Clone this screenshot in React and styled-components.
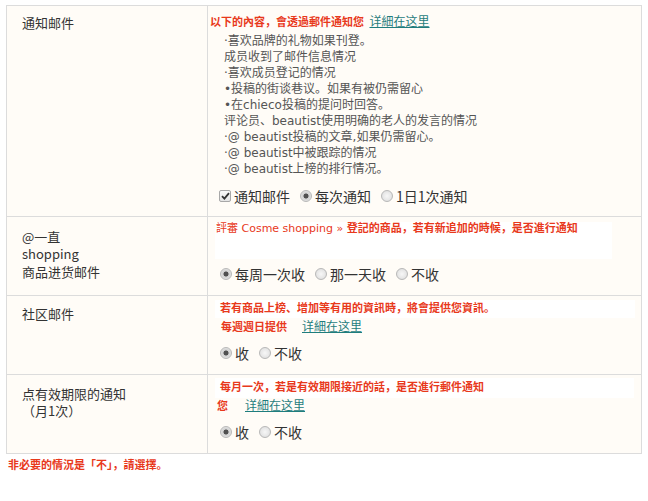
import React from 'react';
import styled, { createGlobalStyle } from 'styled-components';

const GlobalStyle = createGlobalStyle`
  body {
    margin: 0;
    background: #fff;
    font-family: "DejaVu Sans", "Noto Sans CJK SC", sans-serif;
  }
`;

const Page = styled.div`
  padding: 5px 7px 0 6px;
  width: 648px;
  box-sizing: border-box;
`;

const Table = styled.div`
  width: 636px;
  box-sizing: border-box;
  border: 1px solid #dcdcdc;
  background: #fffcf7;
`;

const Row = styled.div`
  display: grid;
  grid-template-columns: 201px 1fr;
  border-bottom: ${p => (p.$last ? 'none' : '1px solid #dcdcdc')};
`;

const Label = styled.div`
  box-sizing: border-box;
  border-right: 1px solid #dcdcdc;
  padding: ${p => p.$top || 9}px 10px 0 15px;
  font-family: "Noto Sans CJK SC", sans-serif;
  font-size: 13px;
  line-height: 17.5px;
  color: #333;
`;

const Content = styled.div`
  padding: ${p => p.$top}px 0 ${p => p.$bottom}px 2px;
`;

const Header = styled.div`
  font-family: "Noto Sans CJK SC", sans-serif;
  font-size: 11px;
  line-height: 16px;
  font-weight: 700;
  color: #e8391c;
`;

const Link = styled.a`
  font-family: "Noto Sans CJK SC", sans-serif;
  font-size: 12px;
  font-weight: 400;
  color: #1f7d7d;
  text-decoration: underline;
  margin-left: ${p => p.$gap || 0}px;
  cursor: pointer;
`;

const List = styled.ul`
  list-style: none;
  margin: 4px 0 0 14px;
  padding: 0;
  font-size: 12px;
  line-height: 16px;
  color: #555;
`;

const Notice = styled.div`
  background: #fff;
  width: ${p => p.$width}px;
  height: ${p => p.$height}px;
  margin-left: 5px;
  padding-left: ${p => p.$indent}px;
  box-sizing: border-box;
  font-family: "DejaVu Sans", "Noto Sans CJK SC", sans-serif;
  font-size: 11px;
  line-height: ${p => p.$line}px;
  font-weight: 700;
  color: #e8391c;
  white-space: nowrap;
`;

const Latin = styled.span`
  font-weight: 400;
`;

const SubLine = styled.div`
  height: ${p => p.$height}px;
  padding-left: ${p => p.$indent}px;
  font-family: "Noto Sans CJK SC", sans-serif;
  font-size: 11px;
  line-height: ${p => p.$height}px;
  font-weight: 700;
  color: #e8391c;
  white-space: nowrap;
`;

const Options = styled.div`
  display: flex;
  align-items: center;
  height: 20px;
  margin: ${p => p.$top}px 0 0 ${p => p.$left || 10}px;
  font-family: "Noto Sans CJK SC", sans-serif;
  font-size: 14px;
  color: #333;
`;

const Option = styled.label`
  display: inline-flex;
  align-items: center;
  gap: 3px;
  margin-right: 10px;
`;

const RadioMark = styled.span`
  width: 12px;
  height: 12px;
  box-sizing: border-box;
  border-radius: 50%;
  border: 1px solid #b8b8b8;
  background: ${p =>
    p.$checked
      ? 'radial-gradient(circle, #505050 0 2.2px, #cfcfcf 2.8px, #f2f2f2 100%)'
      : 'radial-gradient(circle, #f7f7f7 0, #e6e6e6 60%, #d4d4d4 100%)'};
`;

const CheckMark = styled.span`
  width: 12px;
  height: 12px;
  box-sizing: border-box;
  border: 1px solid #a8a8a8;
  border-radius: 2px;
  background: linear-gradient(#fafafa, #e4e4e4);
  display: inline-flex;
  align-items: center;
  justify-content: center;
`;

const Footnote = styled.div`
  margin-top: 2px;
  margin-left: 2px;
  font-family: "Noto Sans CJK SC", sans-serif;
  font-size: 11px;
  line-height: 16px;
  font-weight: 700;
  color: #e8391c;
`;

const Radio = ({ checked, children }) => (
  <Option>
    <RadioMark $checked={checked} />
    {children}
  </Option>
);

const Check = ({ children }) => (
  <Option>
    <CheckMark>
      <svg width="9" height="8" viewBox="0 0 9 8">
        <path d="M1 4.2 L3.4 6.6 L8 1.2" fill="none" stroke="#333" strokeWidth="1.8" />
      </svg>
    </CheckMark>
    {children}
  </Option>
);

const items = [
  '·喜欢品牌的礼物如果刊登。',
  '成员收到了邮件信息情况',
  '·喜欢成员登记的情况',
  '•投稿的街谈巷议。如果有被仍需留心',
  '•在chieco投稿的提问时回答。',
  '评论员、beautist使用明确的老人的发言的情况',
  '·@ beautist投稿的文章,如果仍需留心。',
  '·@ beautist中被跟踪的情况',
  '·@ beautist上榜的排行情况。',
];

export default function App() {
  return (
    <Page>
      <GlobalStyle />
      <Table>
        <Row>
          <Label $top={7.5}>通知邮件</Label>
          <Content $top={7} $bottom={10}>
            <Header>
              以下的內容，會透過郵件通知您 <Link $gap={3}>详細在这里</Link>
            </Header>
            <List>
              {items.map(t => (
                <li key={t}>{t}</li>
              ))}
            </List>
            <Options $top={9} $left={9}>
              <Check>通知邮件</Check>
              <Radio checked>每次通知</Radio>
              <Radio>1日1次通知</Radio>
            </Options>
          </Content>
        </Row>
        <Row>
          <Label $top={10.5}>
            @一直
            <br />
            shopping
            <br />
            商品进货邮件
          </Label>
          <Content $top={5} $bottom={11}>
            <Notice $width={397} $height={37} $line={13} $indent={1}>
              <Latin>評審 Cosme shopping » </Latin>登記的商品，若有新追加的時候，是否進行通知
            </Notice>
            <Options $top={5}>
              <Radio checked>每周一次收</Radio>
              <Radio>那一天收</Radio>
              <Radio>不收</Radio>
            </Options>
          </Content>
        </Row>
        <Row>
          <Label $top={8.5}>社区邮件</Label>
          <Content $top={4} $bottom={11}>
            <Notice $width={420} $height={18} $line={18} $indent={5}>
              若有商品上榜、增加等有用的資訊時，將會提供您資訊。
            </Notice>
            <SubLine $height={15} $indent={11}>
              每週週日提供<Link $gap={15}>详細在这里</Link>
            </SubLine>
            <Options $top={10}>
              <Radio checked>收</Radio>
              <Radio>不收</Radio>
            </Options>
          </Content>
        </Row>
        <Row $last>
          <Label $top={9.5}>
            点有效期限的通知
            <br />
            （月1次）
          </Label>
          <Content $top={3} $bottom={11}>
            <Notice $width={419} $height={20} $line={20} $indent={5}>
              每月一次，若是有效期限接近的話，是否進行郵件通知
            </Notice>
            <SubLine $height={14} $indent={7}>
              您<Link $gap={17}>详細在这里</Link>
            </SubLine>
            <Options $top={10}>
              <Radio checked>收</Radio>
              <Radio>不收</Radio>
            </Options>
          </Content>
        </Row>
      </Table>
      <Footnote>非必要的情況是「不」，請選擇。</Footnote>
    </Page>
  );
}
